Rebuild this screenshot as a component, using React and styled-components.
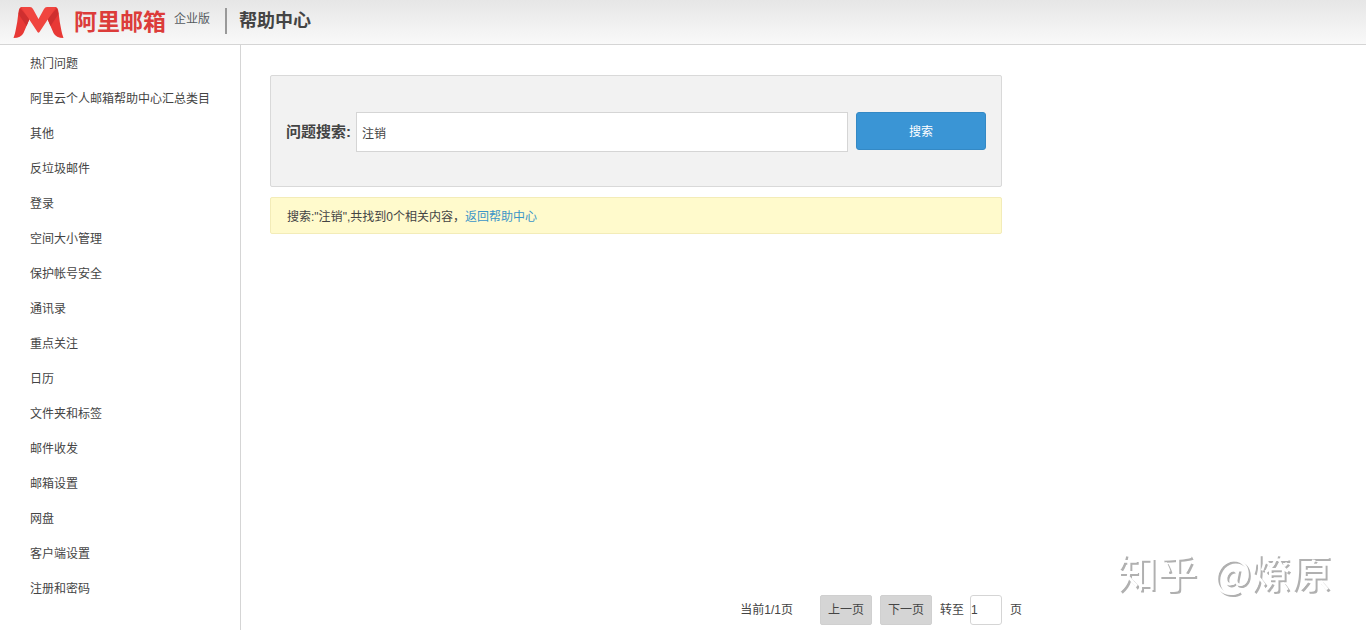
import React, { useState } from 'react';
import styled, { createGlobalStyle } from 'styled-components';

const GlobalStyle = createGlobalStyle`
  * {
    box-sizing: border-box;
  }

  body {
    margin: 0;
    background: #ffffff;
    color: #444444;
    font-family: 'Liberation Sans', 'Noto Sans CJK SC', sans-serif;
    font-size: 12px;
    line-height: 18px;
  }

  input,
  button {
    font: inherit;
    color: inherit;
  }
`;

const Page = styled.div`
  display: flex;
  flex-direction: column;
  min-height: 100vh;
`;

const Header = styled.header`
  display: flex;
  align-items: center;
  height: 45px;
  padding: 0 13px 2px;
  border-bottom: 1px solid #d5d5d5;
  background: linear-gradient(#e6e6e6, #f9f9f9);
`;

const LogoLink = styled.a`
  display: flex;
  align-items: center;
  color: #dc3c3a;
  text-decoration: none;
`;

const LogoMark = styled.svg`
  width: 51px;
  height: 33px;
  margin-top: 3px;
`;

const LogoName = styled.span`
  margin-left: 10px;
  padding-top: 2px;
  font-size: 23px;
  font-weight: bold;
  line-height: 32px;
`;

const Edition = styled.span`
  margin-left: 8px;
  padding-bottom: 4px;
  color: #555b60;
`;

const Title = styled.h1`
  margin: 0 0 0 15px;
  padding-left: 12px;
  border-left: 2px solid #999999;
  font-size: 18px;
  font-weight: bold;
  line-height: 26px;
`;

const Body = styled.div`
  display: flex;
  flex: 1;
`;

const Sidebar = styled.nav`
  flex: none;
  width: 241px;
  border-right: 1px solid #d5d5d5;
`;

const MenuList = styled.ul`
  margin: 0;
  padding: 2px 0 0;
  list-style: none;
`;

const MenuLink = styled.a`
  display: block;
  padding-left: 30px;
  color: #444444;
  line-height: 35px;
  text-decoration: none;
`;

const Main = styled.main`
  display: flex;
  flex: 1;
  flex-direction: column;
  max-width: 781px;
  padding: 30px 0 5px 29px;
`;

const SearchPanel = styled.form`
  display: flex;
  align-items: flex-start;
  margin-right: 20px;
  padding: 36px 15px 34px;
  border: 1px solid #d9d9d9;
  border-radius: 2px;
  background: #f2f2f2;
`;

const SearchLabel = styled.label`
  margin-right: 5px;
  font-size: 15px;
  font-weight: bold;
  line-height: 40px;
`;

const SearchInput = styled.input`
  flex: 1;
  min-width: 0;
  height: 40px;
  margin-right: 8px;
  padding: 0 5px;
  border: 1px solid #d5d5d5;
  background: #ffffff;
`;

const SearchButton = styled.button`
  width: 130px;
  height: 38px;
  padding: 2px 0 0;
  border: 1px solid #3489c5;
  border-radius: 3px;
  background: #3a95d5;
  color: #ffffff;
`;

const ResultTip = styled.p`
  margin: 10px 20px 0 0;
  padding: 10px 16px 7px;
  border: 1px solid #f3ecb8;
  border-radius: 2px;
  background: #fffacc;

  a {
    color: #3a95c8;
    text-decoration: none;
  }
`;

const Pager = styled.div`
  display: flex;
  align-items: center;
  justify-content: flex-end;
  margin-top: auto;
`;

const PageCount = styled.span`
  margin-right: 27px;
`;

const PageButton = styled.button`
  width: 52px;
  height: 30px;
  margin-right: 8px;
  padding: 0;
  border: 1px solid #d0d0d0;
  border-radius: 2px;
  background: #d5d5d5;
`;

const PageInput = styled.input`
  width: 32px;
  height: 30px;
  margin: 0 8px 0 6px;
  padding: 0;
  border: 1px solid #d5d5d5;
  border-radius: 3px;
`;

const Watermark = styled.div`
  position: fixed;
  right: 35px;
  bottom: 31px;
  display: flex;
  gap: 16px;
  color: #ffffff;
  font-family: 'Noto Sans CJK SC', sans-serif;
  font-size: 40px;
  line-height: 56px;
  text-shadow: 2px 2px 0 #b0b0b0;
  pointer-events: none;
`;

const menuArray = [
  '热门问题',
  '阿里云个人邮箱帮助中心汇总类目',
  '其他',
  '反垃圾邮件',
  '登录',
  '空间大小管理',
  '保护帐号安全',
  '通讯录',
  '重点关注',
  '日历',
  '文件夹和标签',
  '邮件收发',
  '邮箱设置',
  '网盘',
  '客户端设置',
  '注册和密码',
];

export default function App() {
  const [keyword, setKeyword] = useState('注销');
  const [searched, setSearched] = useState('注销');
  const [page, setPage] = useState('1');

  const handleSearch = (e) => {
    e.preventDefault();
    setSearched(keyword);
  };

  return (
    <Page lang="zh-CN">
      <GlobalStyle />
      <Header>
        <LogoLink href="#">
          <LogoMark viewBox="0 0 51 33" aria-hidden="true">
            {/* legs */}
            <path
              d="M8 1Q6 2 5.500 6Q4.500 16 2.500 25Q2 28 0.500 32Q8 32 10.500 27L16.500 13L17 1Z"
              fill="#e83936"
            />
            <path
              d="M43 1Q45 2 45.500 6Q46.500 16 48.500 25Q49 28 50.500 32Q43 32 40.500 27L34.500 13L34 1Z"
              fill="#e83936"
            />
            {/* folds */}
            <path d="M7 2L5.500 8L13.500 20L16.500 13Z" fill="#cf2f2f" />
            <path d="M44 2L45.500 8L37.500 20L34.500 13Z" fill="#cf2f2f" />
            {/* centre band */}
            <path
              d="M8 1H17Q19 1 20 3L25.500 13L31 3Q32 1 34 1H43L26.500 26Q25.500 27.500 24.500 26Z"
              fill="#f0453f"
            />
          </LogoMark>
          <LogoName>阿里邮箱</LogoName>
          <Edition>企业版</Edition>
        </LogoLink>
        <Title>帮助中心</Title>
      </Header>

      <Body>
        <Sidebar>
          <MenuList>
            {menuArray.map((name) => (
              <li key={name}>
                <MenuLink href="#">{name}</MenuLink>
              </li>
            ))}
          </MenuList>
        </Sidebar>

        <Main>
          <SearchPanel onSubmit={handleSearch}>
            <SearchLabel htmlFor="keyword">问题搜索:</SearchLabel>
            <SearchInput
              id="keyword"
              type="text"
              value={keyword}
              onChange={(e) => setKeyword(e.target.value)}
            />
            <SearchButton type="submit">搜索</SearchButton>
          </SearchPanel>

          <ResultTip>
            搜索:"{searched}",共找到0个相关内容，<a href="#">返回帮助中心</a>
          </ResultTip>

          <Pager>
            <PageCount>当前1/1页</PageCount>
            <PageButton type="button">上一页</PageButton>
            <PageButton type="button">下一页</PageButton>
            <label htmlFor="page">转至</label>
            <PageInput
              id="page"
              type="text"
              value={page}
              onChange={(e) => setPage(e.target.value)}
            />
            <span>页</span>
          </Pager>
        </Main>
      </Body>

      <Watermark>
        <span>知乎</span>
        <span>@燎原</span>
      </Watermark>
    </Page>
  );
}
